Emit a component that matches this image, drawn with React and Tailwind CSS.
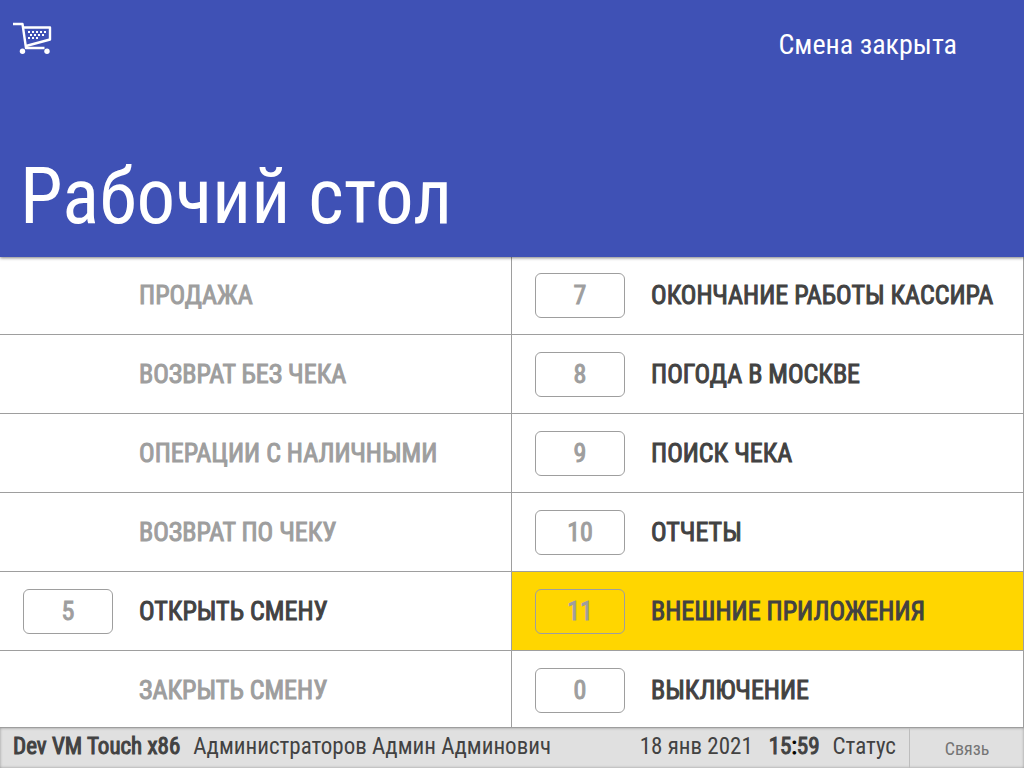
const leftItems = [
  { label: 'ПРОДАЖА' },
  { label: 'ВОЗВРАТ БЕЗ ЧЕКА' },
  { label: 'ОПЕРАЦИИ С НАЛИЧНЫМИ' },
  { label: 'ВОЗВРАТ ПО ЧЕКУ' },
  { key: '5', label: 'ОТКРЫТЬ СМЕНУ' },
  { label: 'ЗАКРЫТЬ СМЕНУ' },
];

const rightItems = [
  { key: '7', label: 'ОКОНЧАНИЕ РАБОТЫ КАССИРА' },
  { key: '8', label: 'ПОГОДА В МОСКВЕ' },
  { key: '9', label: 'ПОИСК ЧЕКА' },
  { key: '10', label: 'ОТЧЕТЫ' },
  { key: '11', label: 'ВНЕШНИЕ ПРИЛОЖЕНИЯ', active: true },
  { key: '0', label: 'ВЫКЛЮЧЕНИЕ' },
];

function CartIcon() {
  return (
    <svg width="40" height="34" viewBox="0 0 40 34" fill="none" stroke="white" strokeWidth="2.4">
      <path d="M0 3H9.5L13 27H31.5" strokeLinejoin="round" />
      <path d="M10 6.5H37V18.5L13 25" strokeLinejoin="round" />
      <path d="M15 11H33M17 14H31M15 17H25" strokeWidth="2" strokeDasharray="2 2" />
      <circle cx="9.5" cy="30.3" r="2.7" fill="white" stroke="none" />
      <circle cx="34" cy="30.3" r="2.7" fill="white" stroke="none" />
    </svg>
  );
}

function MenuItem({ item }) {
  return (
    <button
      disabled={!item.key}
      className={`flex h-[79px] w-full shrink-0 items-center gap-[26px] border-b border-[#9e9e9e] pl-[23px] text-left text-[26px] [-webkit-text-stroke:1px] ${
        item.active ? 'bg-[#ffd600]' : 'bg-white'
      } ${item.key ? 'text-[#424242]' : 'text-[#9e9e9e]'}`}
    >
      {item.key ? (
        <span className="flex h-[45px] w-[90px] shrink-0 items-center justify-center rounded-md border border-[#9e9e9e] text-[#9e9e9e]">
          {item.key}
        </span>
      ) : (
        <span className="w-[90px] shrink-0" />
      )}
      <span className="whitespace-nowrap">{item.label}</span>
    </button>
  );
}

export default function App() {
  return (
    <div className="flex h-screen flex-col overflow-hidden bg-white font-['Roboto_Condensed','Roboto',sans-serif]">
      <header className="relative z-10 flex h-64 shrink-0 flex-col justify-between bg-[#3f51b5] text-white shadow-[0_1px_0_#3f51b5,0_2px_3px_rgba(0,0,0,0.5)]">
        <div className="flex items-start justify-between pl-[13px] pr-[67px] pt-[21px]">
          <button aria-label="Продажа">
            <CartIcon />
          </button>
          <span className="pt-1 text-[28px] leading-10">Смена закрыта</span>
        </div>
        <h1 className="pb-[15px] pl-5 text-[77px] leading-[88px]">Рабочий стол</h1>
      </header>

      <main className="grid min-h-0 flex-1 grid-cols-2 overflow-hidden">
        <div className="flex flex-col border-r border-[#9e9e9e]">
          {leftItems.map((item) => (
            <MenuItem key={item.label} item={item} />
          ))}
        </div>
        <div className="flex flex-col border-r border-[#9e9e9e]">
          {rightItems.map((item) => (
            <MenuItem key={item.label} item={item} />
          ))}
        </div>
      </main>

      <footer className="flex h-[41px] shrink-0 border-t border-[#9e9e9e] bg-[#e0e0e0] text-[23px] text-[#424242] shadow-[inset_0_0_3px_rgba(0,0,0,0.35)]">
        <div className="flex flex-1 items-center whitespace-nowrap px-[13px] pb-0.5">
          <span className="[-webkit-text-stroke:1px]">Dev VM Touch x86</span>
          <span className="ml-[13px]">Администраторов Админ Админович</span>
          <span className="ml-auto">18 янв 2021</span>
          <span className="ml-4 [-webkit-text-stroke:1px]">
            15<span className="text-black">:</span>59
          </span>
          <span className="ml-[13px]">Статус</span>
        </div>
        <button className="w-[115px] border-l border-[#bdbdbd] text-[18px] text-[#757575]">Связь</button>
      </footer>
    </div>
  );
}
